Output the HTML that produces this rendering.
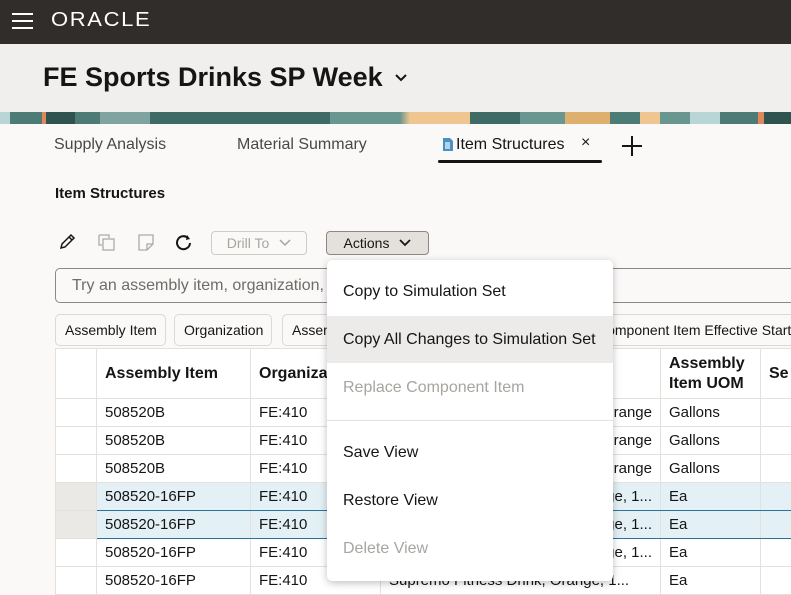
<!DOCTYPE html>
<html><head><meta charset="utf-8"><style>
*{box-sizing:border-box;margin:0;padding:0}
body{width:791px;height:593px;overflow:hidden;background:#fbf9f8;font-family:"Liberation Sans",sans-serif;color:#161513;position:relative}
.abs{position:absolute}
.hdr{left:0;top:0;width:791px;height:44px;background:#312d2a}
.band{left:0;top:44px;width:791px;height:68px;background:#f1efed}
.strip{left:0;top:112px;width:791px;height:12px;background:linear-gradient(90deg,#b9d6d6 0 10px,#4d7b75 10px 42px,#e0885a 42px 46px,#2f5450 46px 75px,#4d7b75 75px 100px,#7fa39e 100px 150px,#3f6b66 150px 330px,#6a9690 330px 400px,#f0c690 410px 470px,#3f6b66 470px 520px,#6a9690 520px 565px,#deaf6e 565px 610px,#4d7b75 610px 640px,#f0c690 640px 660px,#6a9690 660px 690px,#b9d6d6 690px 720px,#4d7b75 720px 758px,#e0885a 758px 764px,#2f5450 764px)}
.tab{top:136px;font-size:16px;color:#4a4845}
.btn{border:1px solid #cfcbc6;border-radius:4px;height:24px;font-size:14px;display:flex;align-items:center;justify-content:center;gap:10px}
.chip{top:314px;height:32px;border:1px solid #dcd8d4;border-radius:5px;background:#fbf9f8;font-size:14px;padding:0 9px;line-height:30px;white-space:nowrap;overflow:hidden}
table{border-collapse:collapse;position:absolute;left:55px;top:348px;background:#fff;font-size:15px;table-layout:fixed;width:765px}
td,th{border:1px solid #e4e1dd;height:28px;padding:0 8px;white-space:nowrap;overflow:hidden;text-align:left}
th{height:50px;font-weight:bold;font-size:16px;line-height:20px}
tr.sel td{background:#e3f0f5;border-top:1px solid #2a7396;border-bottom:1px solid #2a7396}
tr.sel td:first-child{background:#ebe9e6;border-top-color:#e4e1dd;border-bottom-color:#e4e1dd}
.menu{left:327px;top:260px;width:286px;height:321px;background:#fff;border-radius:5px;box-shadow:0 2px 8px rgba(0,0,0,.25);font-size:16px}
.mi{position:absolute;left:0;width:286px;height:47px;padding-left:16px;line-height:47px}
.dis{color:#a8a5a1}
</style></head><body>
<div class="abs hdr"></div>
<svg class="abs" style="left:12px;top:12px" width="22" height="18"><rect y="1" width="21" height="2" fill="#fff"/><rect y="8" width="21" height="2" fill="#fff"/><rect y="15" width="21" height="2" fill="#fff"/></svg>
<div class="abs" style="left:51px;top:9px;color:#fff;font-size:20px;letter-spacing:1.5px;transform:scaleX(1.1);transform-origin:left">ORACLE</div>
<div class="abs band"></div>
<div class="abs" style="left:43px;top:62px;font-size:27px;font-weight:bold">FE Sports Drinks SP Week</div>
<svg class="abs" style="left:394px;top:73px" width="14" height="10"><path d="M2 2l5 5 5-5" stroke="#161513" stroke-width="2" fill="none"/></svg>
<div class="abs strip"></div>
<div class="abs tab" style="left:54px">Supply Analysis</div>
<div class="abs tab" style="left:237px">Material Summary</div>
<svg class="abs" style="left:442px;top:137px" width="12" height="15"><path d="M1 1h7l3 3v10H1z" fill="#4a90c2"/><rect x="3" y="5" width="5" height="7" fill="#fff" opacity=".6"/></svg>
<div class="abs tab" style="left:456px;color:#161513">Item Structures</div>
<div class="abs" style="left:581px;top:134px;font-size:16px">×</div>
<div class="abs" style="left:438px;top:160px;width:164px;height:3px;background:#161513;border-radius:2px"></div>
<svg class="abs" style="left:621px;top:135px" width="22" height="22"><path d="M11 1v20M1 11h20" stroke="#161513" stroke-width="2"/></svg>
<div class="abs" style="left:55px;top:185px;font-size:15px;font-weight:bold">Item Structures</div>
<svg class="abs" style="left:58px;top:233px" width="18" height="18"><path d="M3 15l1-4 9-9 3 3-9 9z M11 4l3 3" stroke="#161513" stroke-width="1.5" fill="none"/></svg>
<svg class="abs" style="left:98px;top:234px" width="18" height="18"><path d="M1 1h10v3 M1 1v10h3" stroke="#aaa" stroke-width="1.3" fill="none"/><rect x="5" y="5" width="11" height="11" stroke="#aaa" stroke-width="1.3" fill="none"/></svg>
<svg class="abs" style="left:138px;top:234px" width="18" height="18"><path d="M1 1h14v9l-6 6H1z M9 16v-6h6" stroke="#aaa" stroke-width="1.3" fill="none"/></svg>
<svg class="abs" style="left:174px;top:233px" width="20" height="20"><path d="M16 10a6.5 6.5 0 1 1-2-5" stroke="#161513" stroke-width="2" fill="none"/><path d="M13 2l3 4-4 1z" fill="#161513"/></svg>
<div class="abs btn" style="left:211px;top:231px;width:96px;color:#a8a5a1">Drill To <svg width="12" height="8"><path d="M1 1l5 5 5-5" stroke="#a8a5a1" stroke-width="1.5" fill="none"/></svg></div>
<div class="abs btn" style="left:326px;top:231px;width:103px;background:#e4e1dd;border-color:#8b8782">Actions <svg width="12" height="8"><path d="M1 1l5 5 5-5" stroke="#161513" stroke-width="1.8" fill="none"/></svg></div>
<div class="abs" style="left:55px;top:268px;width:760px;height:35px;border:1px solid #8b8782;border-radius:5px;background:#fbf9f8;font-size:16px;color:#6f6c68;padding:8px 16px">Try an assembly item, organization, or component</div>
<div class="abs chip" style="left:55px;width:111px">Assembly Item</div>
<div class="abs chip" style="left:174px;width:98px">Organization</div>
<div class="abs chip" style="left:282px">Assembly Item Description</div>
<div class="abs chip" style="left:560px;width:260px;padding-left:36px">Component Item Effective Start Date</div>
<table>
<colgroup><col style="width:41px"><col style="width:154px"><col style="width:130px"><col style="width:280px"><col style="width:100px"><col style="width:60px"></colgroup>
<tr><th></th><th>Assembly Item</th><th>Organization</th><th>Description</th><th>Assembly<br>Item UOM</th><th>Se</th></tr>
<tr><td></td><td>508520B</td><td>FE:410</td><td style="text-align:right">Orange</td><td>Gallons</td><td></td></tr>
<tr><td></td><td>508520B</td><td>FE:410</td><td style="text-align:right">Orange</td><td>Gallons</td><td></td></tr>
<tr><td></td><td>508520B</td><td>FE:410</td><td style="text-align:right">Orange</td><td>Gallons</td><td></td></tr>
<tr class="sel"><td></td><td style="border-left:1px solid #2a7396">508520-16FP</td><td>FE:410</td><td style="text-align:right">Orange, 1...</td><td>Ea</td><td></td></tr>
<tr class="sel"><td></td><td style="border-left:1px solid #2a7396">508520-16FP</td><td>FE:410</td><td style="text-align:right">Orange, 1...</td><td>Ea</td><td></td></tr>
<tr><td></td><td>508520-16FP</td><td>FE:410</td><td style="text-align:right">Orange, 1...</td><td>Ea</td><td></td></tr>
<tr><td></td><td>508520-16FP</td><td>FE:410</td><td>Supremo Fitness Drink, Orange, 1...</td><td>Ea</td><td></td></tr>
</table>
<div class="abs menu">
<div class="mi" style="top:8px">Copy to Simulation Set</div>
<div class="mi" style="top:56px;background:#ecebea">Copy All Changes to Simulation Set</div>
<div class="mi dis" style="top:104px">Replace Component Item</div>
<div class="abs" style="left:0;top:160px;width:286px;height:1px;background:#e4e1dd"></div>
<div class="mi" style="top:169px">Save View</div>
<div class="mi" style="top:217px">Restore View</div>
<div class="mi dis" style="top:265px">Delete View</div>
</div>
</body></html>
